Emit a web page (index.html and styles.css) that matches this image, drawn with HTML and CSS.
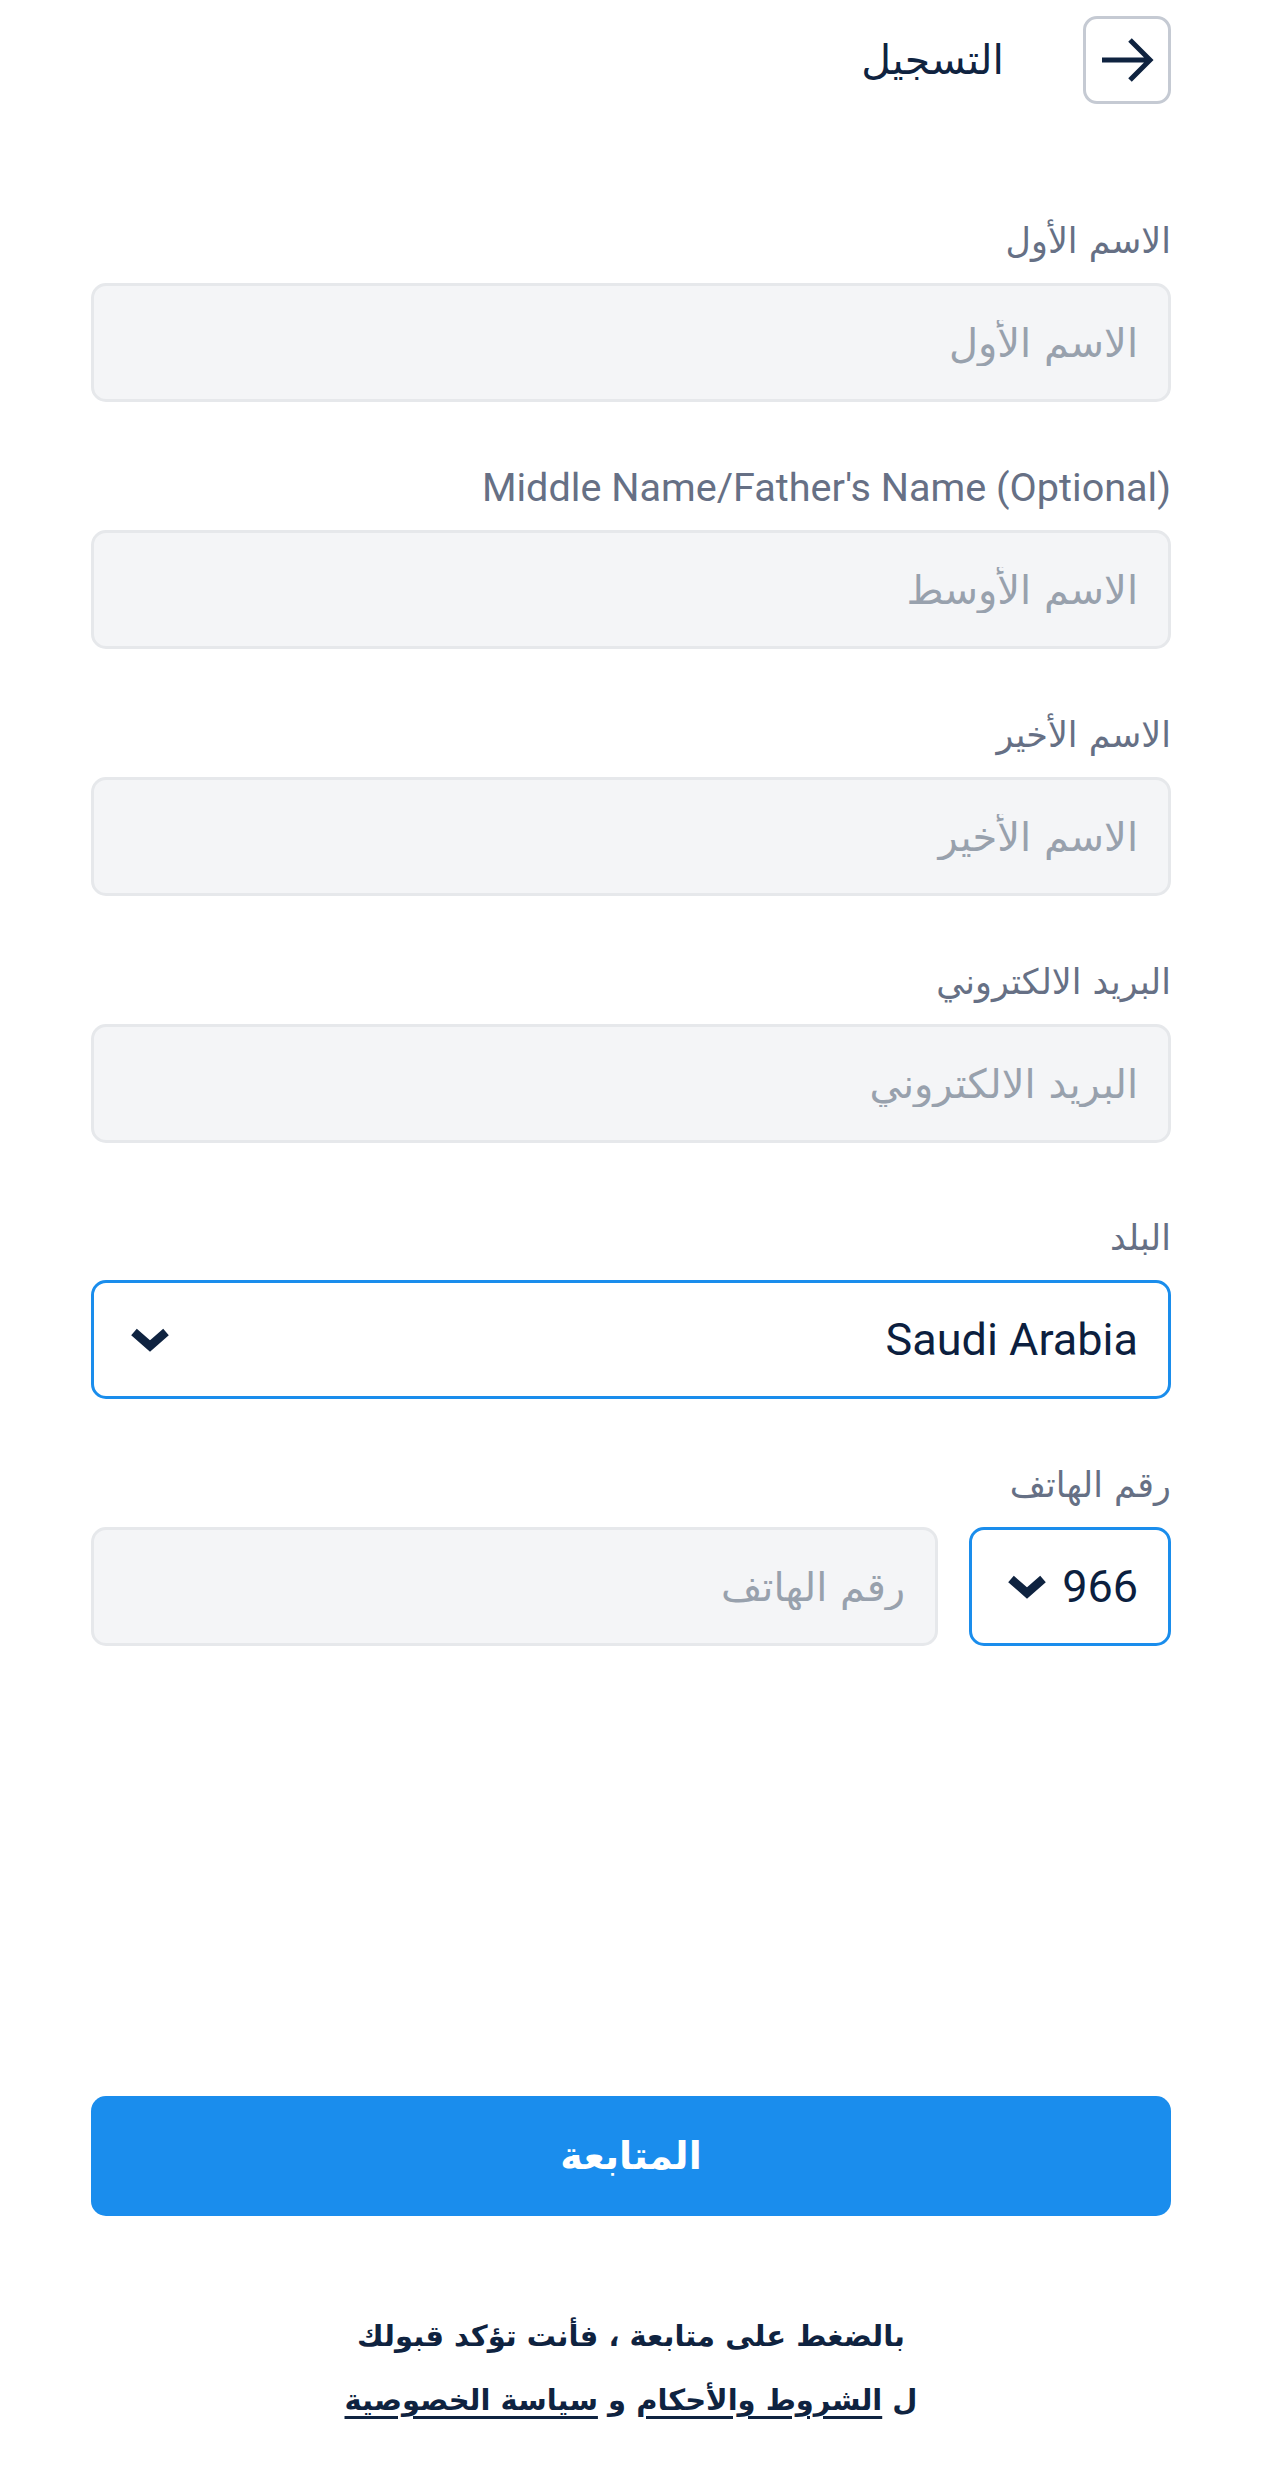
FILE: index.html
```html
<!DOCTYPE html>
<html lang="ar" dir="rtl">
<head>
<meta charset="utf-8">
<title>التسجيل</title>
<link rel="stylesheet" href="styles.css">
</head>
<body>
<div class="page">
  <header class="topbar">
    <button class="back" type="button" aria-label="رجوع">
      <svg width="54" height="46" viewBox="0 0 54 46" aria-hidden="true">
        <path d="M2 23 H50 M30 3 L50 23 L30 43" fill="none" stroke="#0f2340" stroke-width="5"/>
      </svg>
    </button>
    <h1 class="title">التسجيل</h1>
  </header>

  <form class="form">
    <div class="field">
      <label class="label">الاسم الأول</label>
      <input class="input" type="text" placeholder="الاسم الأول">
    </div>
    <div class="field">
      <label class="label label-latin">Middle Name/Father's Name (Optional)</label>
      <input class="input" type="text" placeholder="الاسم الأوسط">
    </div>
    <div class="field">
      <label class="label">الاسم الأخير</label>
      <input class="input" type="text" placeholder="الاسم الأخير">
    </div>
    <div class="field">
      <label class="label">البريد الالكتروني</label>
      <input class="input" type="text" placeholder="البريد الالكتروني">
    </div>
    <div class="field field-select">
      <label class="label">البلد</label>
      <div class="select">
        <span class="select-value">Saudi Arabia</span>
        <svg class="chev" width="40" height="24" viewBox="0 0 40 24" aria-hidden="true">
          <path d="M4 4 L20 18 L36 4" fill="none" stroke="#0f2340" stroke-width="8.5"/>
        </svg>
      </div>
    </div>
    <div class="field">
      <label class="label">رقم الهاتف</label>
      <div class="phone-row">
        <div class="select code">
          <span class="select-value">966</span>
          <svg class="chev" width="40" height="24" viewBox="0 0 40 24" aria-hidden="true">
            <path d="M4 4 L20 18 L36 4" fill="none" stroke="#0f2340" stroke-width="8.5"/>
          </svg>
        </div>
        <input class="input phone" type="text" placeholder="رقم الهاتف">
      </div>
    </div>
  </form>

  <button class="submit" type="button">المتابعة</button>

  <p class="terms">
    بالضغط على متابعة ، فأنت تؤكد قبولك<br>
    ل <a href="#">الشروط والأحكام</a> و <a href="#">سياسة الخصوصية</a>
  </p>
</div>
</body>
</html>
```

FILE: styles.css
```css
* { box-sizing: border-box; }

html, body {
  margin: 0;
  padding: 0;
  background: #ffffff;
}

body {
  font-family: "DejaVu Sans", "Noto Sans", sans-serif;
  color: #0f2340;
}

.page {
  padding: 16px 105px 0 91px;
}

.topbar {
  display: flex;
  align-items: center;
  height: 88px;
  gap: 79px;
}

.back {
  width: 88px;
  height: 88px;
  border: 3px solid #c5cad3;
  border-radius: 14px;
  background: #ffffff;
  display: flex;
  align-items: center;
  justify-content: center;
  padding: 0;
}

.title {
  margin: 0;
  font-size: 41px;
  font-weight: normal;
  color: #0f2340;
  line-height: 88px;
}

.form {
  padding-top: 111px;
}

.field {
  display: flex;
  flex-direction: column;
  margin-bottom: 60px;
}

.field-select {
  padding-top: 9px;
}

.label {
  font-size: 35px;
  line-height: 52px;
  height: 52px;
  margin-bottom: 16px;
  color: #667085;
}

.label-latin {
  font-family: Roboto, "Noto Sans", sans-serif;
  font-size: 39.6px;
}

.input {
  width: 100%;
  height: 119px;
  border: 3px solid #e6e8eb;
  border-radius: 15px;
  background: #f4f5f7;
  padding: 0 30px;
  font-family: "DejaVu Sans", "Noto Sans", sans-serif;
  font-size: 40px;
  color: #0f2340;
  direction: rtl;
  outline: none;
}

.input::placeholder {
  color: #98a1ad;
}

.select {
  height: 119px;
  border: 3px solid #1a8dec;
  border-radius: 15px;
  background: #ffffff;
  display: flex;
  align-items: center;
  justify-content: space-between;
  padding: 0 30px 0 36px;
}

.select-value {
  font-family: Roboto, "Noto Sans", sans-serif;
  font-size: 45px;
  color: #0c1f3f;
  direction: ltr;
}

.chev {
  display: block;
}

.phone-row {
  display: flex;
  gap: 31px;
}

.code {
  flex: none;
  gap: 15px;
  justify-content: flex-start;
  padding: 0 30px 0 35px;
}

.phone {
  flex: 1;
  width: auto;
}

.submit {
  display: block;
  width: 100%;
  height: 120px;
  margin-top: 450px;
  border: none;
  border-radius: 15px;
  background: #1a8ded;
  color: #ffffff;
  font-family: "DejaVu Sans", "Noto Sans", sans-serif;
  font-size: 38px;
  font-weight: bold;
}

.terms {
  margin: 88px 0 0;
  text-align: center;
  font-size: 29px;
  font-weight: bold;
  line-height: 64px;
  color: #0f2340;
}

.terms a {
  color: #0f2340;
  text-decoration: underline;
  text-decoration-thickness: 3px;
  text-underline-offset: 6px;
}
```
